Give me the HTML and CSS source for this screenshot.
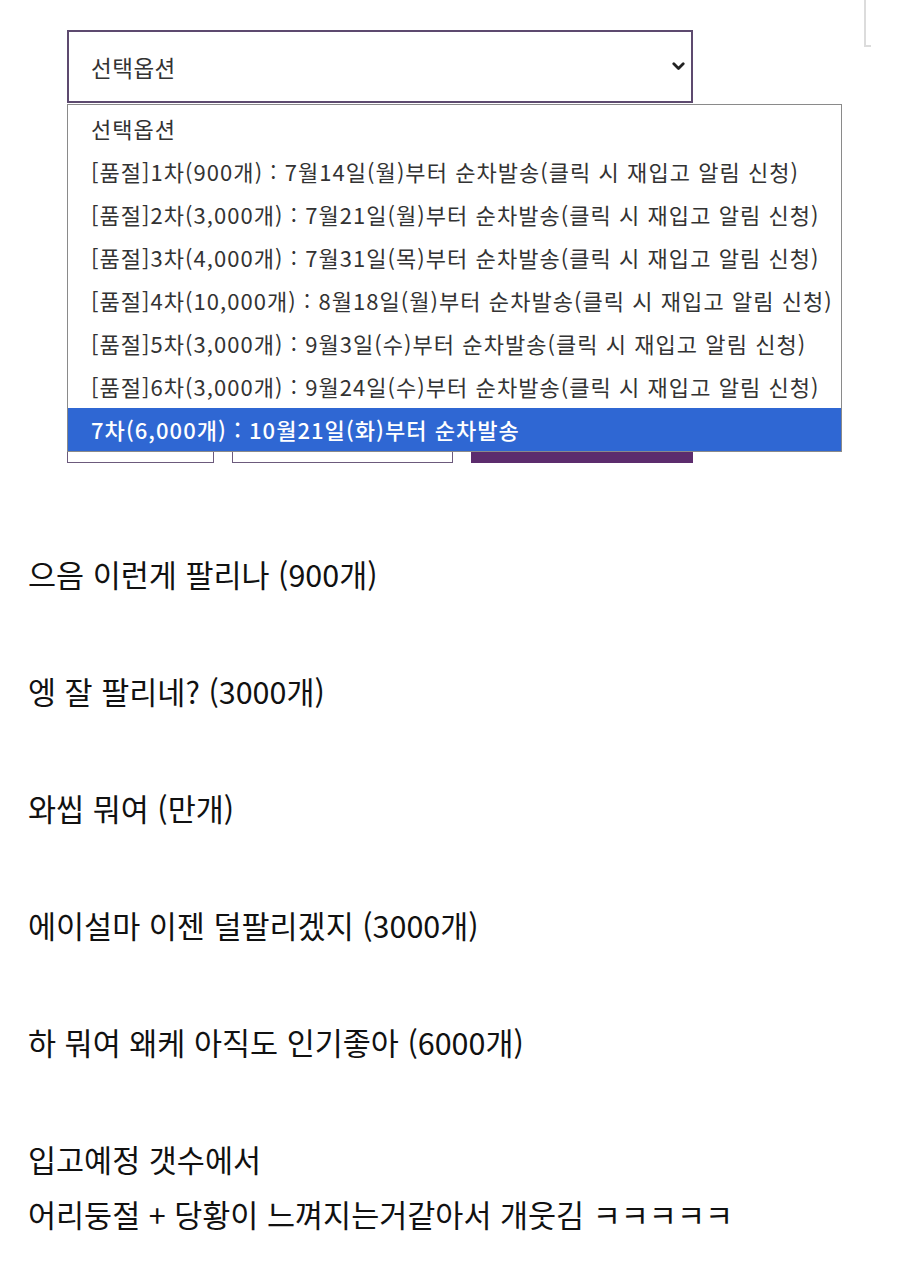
FILE: index.html
```html
<!DOCTYPE html>
<html lang="ko">
<head>
    <meta charset="UTF-8">
    <meta name="viewport" content="width=device-width, initial-scale=1.0">
    <title>선택옵션</title>
    <link rel="stylesheet" href="styles.css">
</head>
<body>
    <!-- Option picker -->
    <div class="top">
        <div class="shop">
            <div class="select">
                <span>선택옵션</span>
                <svg class="chevron" width="13" height="9" viewBox="0 0 13 9">
                    <path d="M1.8 1.8 L6.5 6.5 L11.2 1.8" fill="none" stroke="#222" stroke-width="2.8" stroke-linecap="round" stroke-linejoin="round"/>
                </svg>
            </div>

            <!-- Open list -->
            <div class="options">
                <div class="option">선택옵션</div>
                <div class="option">[품절]1차(900개) : 7월14일(월)부터 순차발송(클릭 시 재입고 알림 신청)</div>
                <div class="option">[품절]2차(3,000개) : 7월21일(월)부터 순차발송(클릭 시 재입고 알림 신청)</div>
                <div class="option">[품절]3차(4,000개) : 7월31일(목)부터 순차발송(클릭 시 재입고 알림 신청)</div>
                <div class="option">[품절]4차(10,000개) : 8월18일(월)부터 순차발송(클릭 시 재입고 알림 신청)</div>
                <div class="option">[품절]5차(3,000개) : 9월3일(수)부터 순차발송(클릭 시 재입고 알림 신청)</div>
                <div class="option">[품절]6차(3,000개) : 9월24일(수)부터 순차발송(클릭 시 재입고 알림 신청)</div>
                <div class="option active">7차(6,000개) : 10월21일(화)부터 순차발송</div>
            </div>

            <!-- Buttons under the list -->
            <div class="buttons">
                <div class="btn btn-small"></div>
                <div class="btn btn-wide"></div>
                <div class="btn btn-buy"></div>
            </div>
        </div>
        <div class="corner"></div>
    </div>

    <!-- Post text -->
    <div class="post">
        <p>으음 이런게 팔리나 (900개)</p>
        <p>엥 잘 팔리네? (3000개)</p>
        <p>와씹 뭐여 (만개)</p>
        <p>에이설마 이젠 덜팔리겠지 (3000개)</p>
        <p>하 뭐여 왜케 아직도 인기좋아 (6000개)</p>
        <p>입고예정 갯수에서<br>어리둥절 + 당황이 느껴지는거같아서 개웃김 ㅋㅋㅋㅋㅋ</p>
    </div>
</body>
</html>
```

FILE: styles.css
```css
/* --- GENERAL --- */
body {
    margin: 0;
    background: #fff;
    font-family: "Noto Sans CJK KR", "Noto Sans", sans-serif;
    color: #111;
}

/* --- TOP ROW --- */
.top {
    display: flex;
    align-items: flex-start;
}

.shop {
    position: relative;
    width: 626px;
    margin-left: 67px;
    margin-top: 30px;
}

.corner {
    box-sizing: border-box;
    width: 7px;
    height: 47px;
    margin-left: auto;
    margin-right: 29px;
    border-left: 2px solid #dcdcdc;
    border-bottom: 2px solid #dcdcdc;
}

/* --- SELECT BOX --- */
.select {
    box-sizing: border-box;
    height: 73px;
    display: flex;
    align-items: center;
    justify-content: space-between;
    padding: 0 6px 0 22px;
    border: 2px solid #5d4a6f;
    font-size: 22.5px;
    letter-spacing: 0.5px;
    color: #333;
}

.chevron {
    display: block;
}

/* --- OPEN LIST --- */
.options {
    position: absolute;
    top: 74px;
    left: 0;
    z-index: 2;
    box-sizing: border-box;
    width: 775px;
    padding-top: 2px;
    background: #fff;
    border: 1px solid #8a8a8a;
}

.option {
    height: 43px;
    line-height: 43px;
    padding-left: 23px;
    font-size: 22px;
    letter-spacing: 1.05px;
    color: #333;
    white-space: nowrap;
}

.option.active {
    background: #2f67d3;
    color: #fff;
    font-weight: 500;
}

/* --- BUTTONS --- */
.buttons {
    display: flex;
    gap: 18px;
    margin-top: 312px;
}

.btn {
    box-sizing: border-box;
    height: 48px;
    border: 1px solid #6c5a7c;
}

.btn-small {
    width: 147px;
}

.btn-wide {
    width: 221px;
}

.btn-buy {
    width: 222px;
    background: #5c2c6d;
    border-color: #5c2c6d;
}

/* --- POST TEXT --- */
.post {
    margin-top: 84px;
    padding: 0 28px;
}

.post p {
    margin: 0 0 62px;
    font-size: 30.5px;
    line-height: 55px;
}

.post p:last-child {
    margin-bottom: 0;
}
```
